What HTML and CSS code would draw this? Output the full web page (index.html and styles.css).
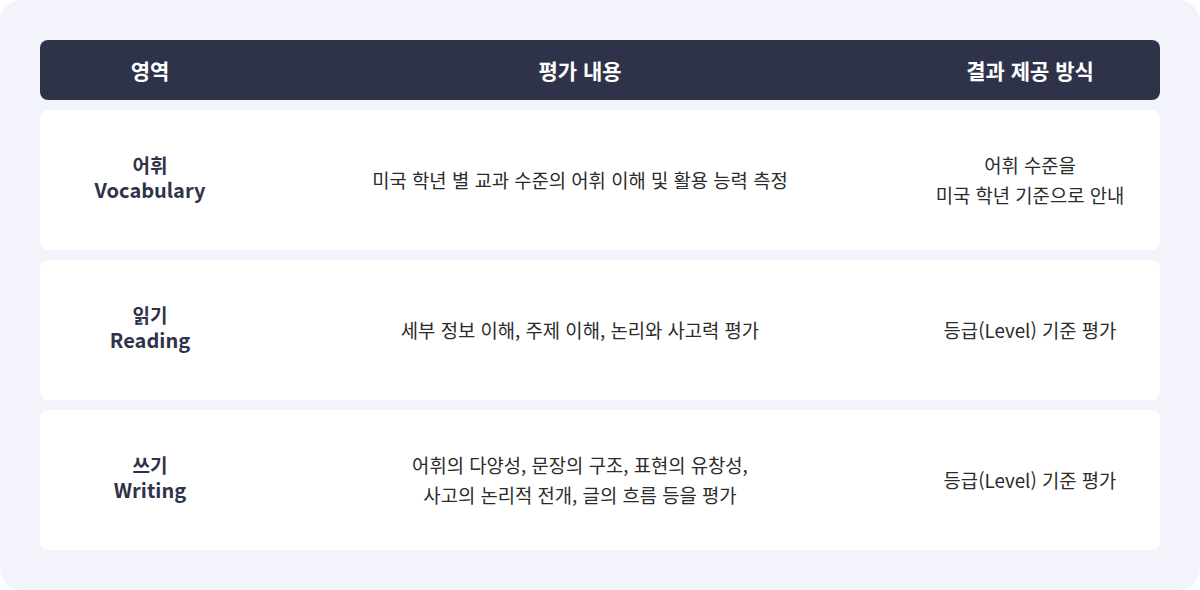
FILE: index.html
```html
<!DOCTYPE html>
<html lang="ko">
<head>
<meta charset="utf-8">
<link rel="stylesheet" href="styles.css">
</head>
<body>
<div class="panel">
  <div class="head row-grid">
    <div class="cell">영역</div>
    <div class="cell">평가 내용</div>
    <div class="cell">결과 제공 방식</div>
  </div>
  <div class="row row-grid">
    <div class="cell area"><span class="ko">어휘</span><span class="en">Vocabulary</span></div>
    <div class="cell">미국 학년 별 교과 수준의 어휘 이해 및 활용 능력 측정</div>
    <div class="cell">어휘 수준을<br>미국 학년 기준으로 안내</div>
  </div>
  <div class="row row-grid">
    <div class="cell area"><span class="ko">읽기</span><span class="en">Reading</span></div>
    <div class="cell">세부 정보 이해, 주제 이해, 논리와 사고력 평가</div>
    <div class="cell">등급(Level) 기준 평가</div>
  </div>
  <div class="row row-grid">
    <div class="cell area"><span class="ko">쓰기</span><span class="en">Writing</span></div>
    <div class="cell">어휘의 다양성, 문장의 구조, 표현의 유창성,<br>사고의 논리적 전개, 글의 흐름 등을 평가</div>
    <div class="cell">등급(Level) 기준 평가</div>
  </div>
</div>
</body>
</html>
```

FILE: styles.css
```css
html, body {
  margin: 0;
  padding: 0;
  background: #ffffff;
}
body {
  font-family: "Noto Sans CJK KR", "Noto Sans", sans-serif;
}
.panel {
  width: 1200px;
  height: 590px;
  box-sizing: border-box;
  background: #f3f4fb;
  border-radius: 22px;
  padding: 40px;
  display: flex;
  flex-direction: column;
  gap: 10px;
}
.row-grid {
  display: grid;
  grid-template-columns: 220px 640px 260px;
}
.cell {
  display: flex;
  align-items: center;
  justify-content: center;
  text-align: center;
}
.head {
  height: 60px;
  background: #2e3349;
  border-radius: 8px;
  color: #ffffff;
  font-size: 21px;
  font-weight: 700;
}
.row {
  height: 140px;
  background: #ffffff;
  border-radius: 8px;
  color: #2b2b2b;
  font-size: 18.8px;
  line-height: 30px;
}
.area {
  flex-direction: column;
  color: #2e3349;
  font-weight: 700;
  padding-bottom: 5px;
}
.area .ko {
  font-size: 19px;
  line-height: 24px;
}
.area .en {
  font-size: 20px;
  line-height: 26px;
}
```
